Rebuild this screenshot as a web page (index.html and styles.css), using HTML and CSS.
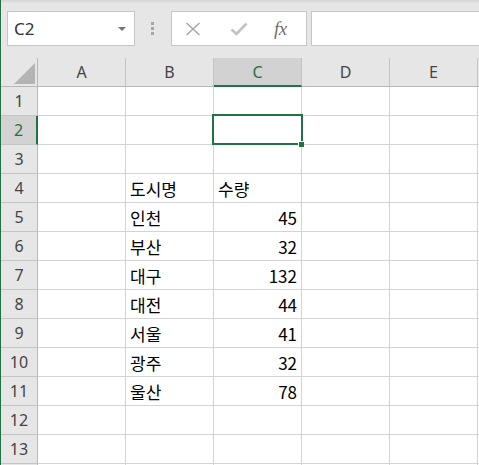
FILE: index.html
```html
<!DOCTYPE html>
<html lang="ko">
<head>
<meta charset="utf-8">
<title>Excel</title>
<link rel="stylesheet" href="styles.css">
</head>
<body>
<div class="app">
  <div class="formula-bar">
    <div class="name-box">
      <span class="name-text">C2</span>
      <span class="caret"></span>
    </div>
    <div class="grip"><i></i><i></i><i></i></div>
    <div class="fx-buttons">
      <svg class="ico ico-x" viewBox="0 0 16 14" width="16" height="14"><path d="M1.5 1 L14.5 13 M14.5 1 L1.5 13" stroke="#a8a8a8" stroke-width="1.6" fill="none"/></svg>
      <svg class="ico ico-check" viewBox="0 0 18 14" width="18" height="14"><path d="M1.5 7.5 L6.5 12 L16.5 1.5" stroke="#c2c2c2" stroke-width="2.6" fill="none"/></svg>
      <span class="fx">fx</span>
    </div>
    <div class="formula-input"></div>
  </div>

  <div class="sheet">
    <div class="corner"><span class="tri"></span></div>
    <div class="colhead">A</div>
    <div class="colhead">B</div>
    <div class="colhead sel">C</div>
    <div class="colhead">D</div>
    <div class="colhead">E</div>
    <div class="colhead rest"></div>

    <div class="rowhead">1</div><div class="cell"></div><div class="cell"></div><div class="cell"></div><div class="cell"></div><div class="cell"></div><div class="cell rest"></div>
    <div class="rowhead sel">2</div><div class="cell"></div><div class="cell"></div><div class="cell"></div><div class="cell"></div><div class="cell"></div><div class="cell rest"></div>
    <div class="rowhead">3</div><div class="cell"></div><div class="cell"></div><div class="cell"></div><div class="cell"></div><div class="cell"></div><div class="cell rest"></div>
    <div class="rowhead">4</div><div class="cell"></div><div class="cell">도시명</div><div class="cell">수량</div><div class="cell"></div><div class="cell"></div><div class="cell rest"></div>
    <div class="rowhead">5</div><div class="cell"></div><div class="cell">인천</div><div class="cell num">45</div><div class="cell"></div><div class="cell"></div><div class="cell rest"></div>
    <div class="rowhead">6</div><div class="cell"></div><div class="cell">부산</div><div class="cell num">32</div><div class="cell"></div><div class="cell"></div><div class="cell rest"></div>
    <div class="rowhead">7</div><div class="cell"></div><div class="cell">대구</div><div class="cell num">132</div><div class="cell"></div><div class="cell"></div><div class="cell rest"></div>
    <div class="rowhead">8</div><div class="cell"></div><div class="cell">대전</div><div class="cell num">44</div><div class="cell"></div><div class="cell"></div><div class="cell rest"></div>
    <div class="rowhead">9</div><div class="cell"></div><div class="cell">서울</div><div class="cell num">41</div><div class="cell"></div><div class="cell"></div><div class="cell rest"></div>
    <div class="rowhead">10</div><div class="cell"></div><div class="cell">광주</div><div class="cell num">32</div><div class="cell"></div><div class="cell"></div><div class="cell rest"></div>
    <div class="rowhead">11</div><div class="cell"></div><div class="cell">울산</div><div class="cell num">78</div><div class="cell"></div><div class="cell"></div><div class="cell rest"></div>
    <div class="rowhead">12</div><div class="cell"></div><div class="cell"></div><div class="cell"></div><div class="cell"></div><div class="cell"></div><div class="cell rest"></div>
    <div class="rowhead">13</div><div class="cell"></div><div class="cell"></div><div class="cell"></div><div class="cell"></div><div class="cell"></div><div class="cell rest"></div>
    <div class="rowhead"></div><div class="cell"></div><div class="cell"></div><div class="cell"></div><div class="cell"></div><div class="cell"></div><div class="cell rest"></div>

    <div class="selection"><span class="handle"></span></div>
  </div>
</div>
</body>
</html>
```

FILE: styles.css
```css
* { box-sizing: border-box; }

html, body {
  margin: 0;
  padding: 0;
  background: #e6e6e6;
}

.app {
  width: 479px;
  height: 465px;
  overflow: hidden;
  border-left: 1px solid #217346;
  background: #e6e6e6;
  font-family: "Noto Sans", "Open Sans", sans-serif;
}

/* ---------- formula bar ---------- */
.formula-bar {
  height: 58px;
  display: flex;
  align-items: flex-start;
  padding: 11px 0 0 6px;
  background: linear-gradient(#d4d4d4 0, #e4e4e4 3px, #e6e6e6 5px);
}

.name-box {
  width: 128px;
  height: 35px;
  background: #fff;
  border: 1px solid #c6c6c6;
  display: flex;
  align-items: center;
  padding-left: 6px;
  position: relative;
}

.name-text {
  font-family: "Noto Sans", sans-serif;
  font-size: 17px;
  color: #333;
  line-height: 1;
}

.caret {
  position: absolute;
  right: 8px;
  top: 15px;
  width: 0;
  height: 0;
  border-left: 4px solid transparent;
  border-right: 4px solid transparent;
  border-top: 4px solid #777;
}

.grip {
  width: 3px;
  margin: 11px 0 0 16px;
  display: flex;
  flex-direction: column;
  gap: 2px;
}
.grip i {
  display: block;
  width: 3px;
  height: 3px;
  background: #a6a6a6;
}

.fx-buttons {
  width: 136px;
  height: 35px;
  margin-left: 17px;
  background: #fff;
  border: 1px solid #c6c6c6;
  display: flex;
  align-items: center;
  padding-left: 13px;
}

.ico-x { margin-top: 1px; }
.ico-check { margin-left: 29px; margin-top: 1px; }

.fx {
  margin-left: 26px;
  font-family: "Liberation Serif", "DejaVu Serif", serif;
  font-style: italic;
  font-size: 19px;
  color: #6f6f6f;
  letter-spacing: -0.5px;
}

.formula-input {
  flex: 1;
  height: 35px;
  margin-left: 4px;
  background: #fff;
  border: 1px solid #c6c6c6;
  border-right: none;
}

/* ---------- sheet ---------- */
.sheet {
  position: relative;
  display: grid;
  grid-template-columns: 37px repeat(5, 88px) 1fr;
  grid-auto-rows: 29px;
  background: #fff;
}

.corner {
  background: #e6e6e6;
  border-right: 1px solid #b8b8b8;
  border-bottom: 1px solid #b8b8b8;
  position: relative;
}
.tri {
  position: absolute;
  right: 2px;
  bottom: 2px;
  width: 0;
  height: 0;
  border-left: 21px solid transparent;
  border-bottom: 21px solid #b4b4b4;
}

.colhead {
  background: #e6e6e6;
  border-right: 1px solid #c4c4c4;
  border-bottom: 1px solid #b8b8b8;
  display: flex;
  align-items: center;
  justify-content: center;
  font-size: 16px;
  color: #444;
  padding-bottom: 1px;
}
.colhead.sel {
  background: #d2d2d2;
  color: #217346;
  border-bottom: 2px solid #217346;
  padding-bottom: 0;
}
.colhead.rest { border-right: none; }

.rowhead {
  background: #e6e6e6;
  border-right: 1px solid #b8b8b8;
  border-bottom: 1px solid #c4c4c4;
  display: flex;
  align-items: center;
  justify-content: center;
  font-size: 16px;
  color: #444;
}
.rowhead.sel {
  background: #d2d2d2;
  color: #217346;
  border-right: 2px solid #217346;
}

.cell {
  border-right: 1px solid #d4d4d4;
  border-bottom: 1px solid #d4d4d4;
  display: flex;
  align-items: flex-end;
  padding: 0 4px 2px 4px;
  font-family: "Noto Sans CJK KR", "Noto Sans", sans-serif;
  font-size: 17px;
  line-height: 22px;
  color: #000;
  white-space: nowrap;
}
.cell.num { justify-content: flex-end; }
.cell.rest { border-right: none; }

.selection {
  position: absolute;
  left: 211px;
  top: 56px;
  width: 91px;
  height: 31px;
  border: 2px solid #217346;
}
.handle {
  position: absolute;
  right: -3px;
  bottom: -4px;
  width: 6px;
  height: 6px;
  background: #217346;
  border: 1px solid #fff;
  border-bottom: none;
  border-right: none;
}
```
